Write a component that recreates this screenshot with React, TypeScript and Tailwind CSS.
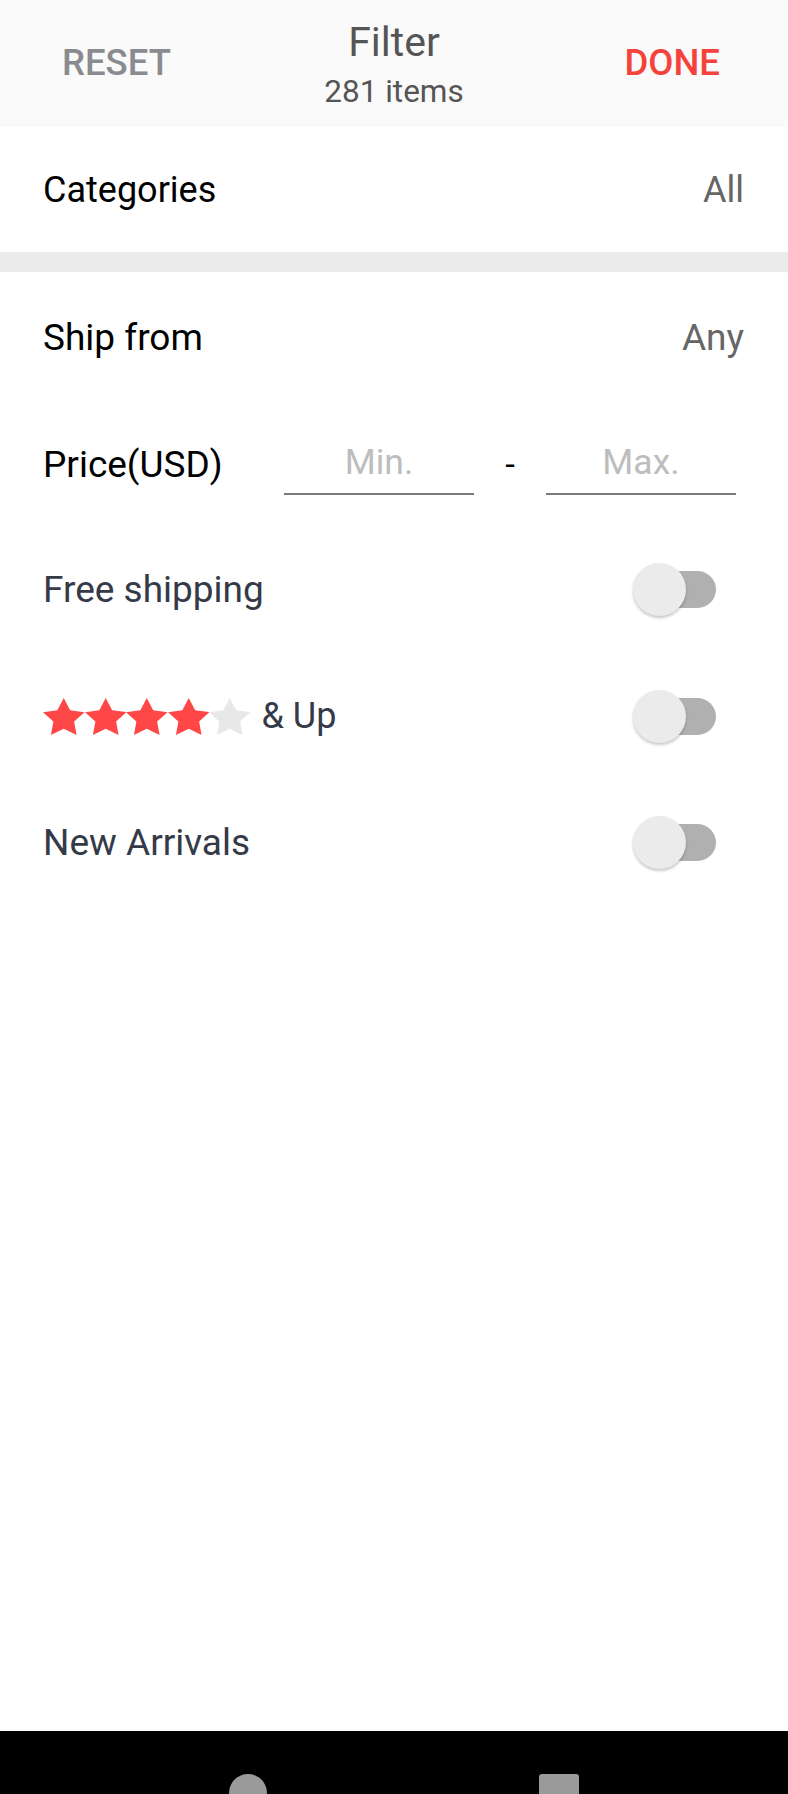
import React from "react";

const font = { fontFamily: "Roboto, 'Noto Sans', Arial, sans-serif" };

function Star({ on }: { on: boolean }) {
  return (
    <svg
      viewBox="2 2 20 19.02"
      preserveAspectRatio="none"
      className="w-[41.5px] h-[37px] shrink-0"
    >
      <polygon
        points="12,2 15.09,8.26 22,9.27 17,14.14 18.18,21.02 12,17.77 5.82,21.02 7,14.14 2,9.27 8.91,8.26"
        fill={on ? "#ff4747" : "#e8e8e8"}
      />
    </svg>
  );
}

function Toggle() {
  return (
    <div className="relative w-[84px] h-[53px] shrink-0">
      <div className="absolute left-[14px] right-0 top-[8px] h-[37px] rounded-full bg-[#b0b0b0]" />
      <div className="absolute left-[1px] top-0 w-[53px] h-[53px] rounded-full bg-[#ebebeb] shadow-[0_2px_3px_rgba(0,0,0,0.22)]" />
    </div>
  );
}

export default function App() {
  return (
    <div className="flex flex-col h-[1794px] w-full bg-white overflow-hidden" style={font}>
      {/* Header */}
      <div className="grid grid-cols-[1fr_auto_1fr] h-[127px] bg-[#fafafa] shrink-0">
        <div className="self-center pl-[62px] text-[36.5px] leading-none font-medium text-[#898b90]">
          RESET
        </div>
        <div className="flex flex-col items-center pt-[22px]">
          <div className="text-[41px] leading-none text-[#555555]">Filter</div>
          <div className="mt-[13px] text-[31.5px] leading-none text-[#555555]">281 items</div>
        </div>
        <div className="self-center justify-self-end pr-[68px] text-[36.5px] leading-none font-medium text-[#f4433b]">
          DONE
        </div>
      </div>

      {/* Categories */}
      <div className="flex items-center justify-between h-[125px] pl-[43px] pr-[44px] shrink-0">
        <span className="text-[36px] leading-none text-black">Categories</span>
        <span className="text-[36px] leading-none text-[#666666]">All</span>
      </div>

      <div className="h-[20px] bg-[#ebebeb] shrink-0" />

      {/* Ship from */}
      <div className="flex items-center justify-between h-[130px] pl-[43px] pr-[44px] shrink-0">
        <span className="text-[37px] leading-none text-black">Ship from</span>
        <span className="text-[37px] leading-none text-[#666666]">Any</span>
      </div>

      {/* Price */}
      <div className="flex items-center h-[124px] pl-[43px] shrink-0">
        <span className="w-[241px] text-[37px] leading-none text-black">Price(USD)</span>
        <div className="w-[190px] pt-[12px] pb-[12px] border-b-2 border-[#7a7a7a] text-center text-[35.5px] leading-none text-[#bdbdbd]">
          Min.
        </div>
        <div className="w-[72px] text-center text-[35px] leading-none text-black">-</div>
        <div className="w-[190px] pt-[12px] pb-[12px] border-b-2 border-[#7a7a7a] text-center text-[35.5px] leading-none text-[#bdbdbd]">
          Max.
        </div>
      </div>

      {/* Free shipping */}
      <div className="flex items-center justify-between h-[126px] pl-[43px] pr-[72px] shrink-0">
        <span className="text-[37px] leading-none text-[#353a48]">Free shipping</span>
        <Toggle />
      </div>

      {/* Stars */}
      <div className="flex items-center justify-between h-[128px] pl-[43px] pr-[72px] shrink-0">
        <div className="flex items-center">
          <Star on />
          <Star on />
          <Star on />
          <Star on />
          <Star on={false} />
          <span className="ml-[11px] text-[36px] leading-none text-[#353a48]">&amp; Up</span>
        </div>
        <Toggle />
      </div>

      {/* New Arrivals */}
      <div className="flex items-center justify-between h-[124px] pl-[43px] pr-[72px] shrink-0">
        <span className="text-[37px] leading-none text-[#353a48]">New Arrivals</span>
        <Toggle />
      </div>

      <div className="flex-1" />

      {/* Android nav bar */}
      <div className="h-[63px] bg-black shrink-0 overflow-hidden flex items-start pt-[43px] pl-[229px]">
        <div className="w-[38px] h-[38px] rounded-full bg-[#9a9a9a] shrink-0" />
        <div className="ml-[272px] w-[40px] h-[40px] rounded-[3px] bg-[#9a9a9a] shrink-0" />
      </div>
    </div>
  );
}
